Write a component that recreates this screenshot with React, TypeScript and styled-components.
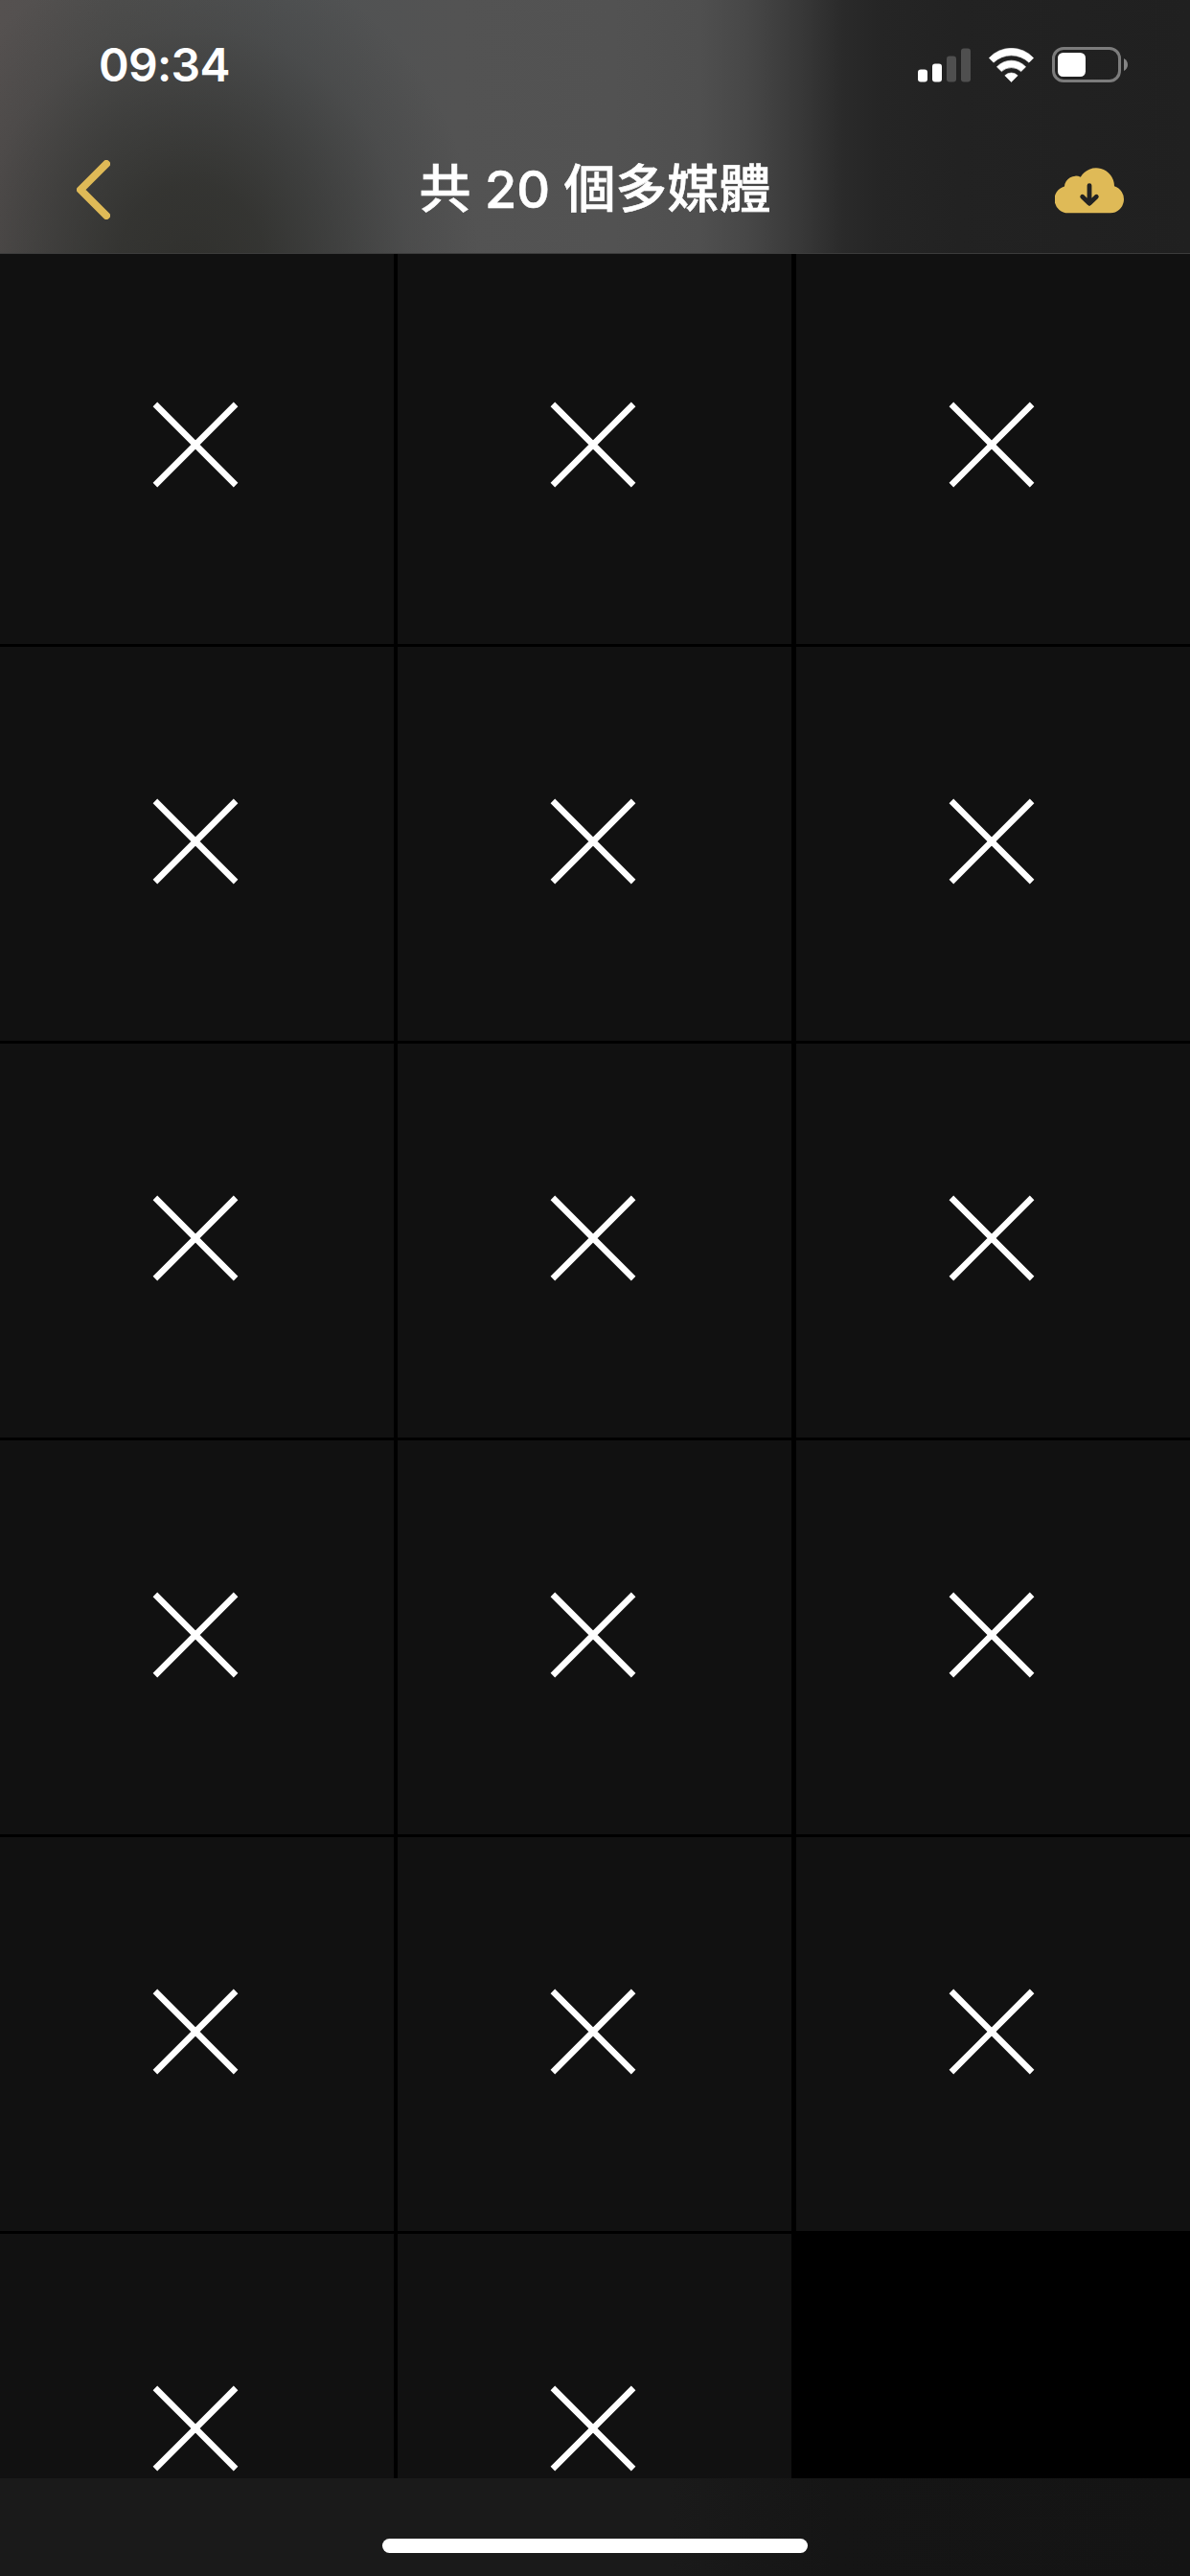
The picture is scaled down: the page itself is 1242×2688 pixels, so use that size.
import React from "react";
import styled, { createGlobalStyle } from "styled-components";

const GOLD = "#dfba57";

const GlobalStyle = createGlobalStyle`
  *, *::before, *::after { box-sizing: border-box; }
  body { margin: 0; background: #000; }
`;

const Screen = styled.main`
  display: flex;
  flex-direction: column;
  width: 1242px;
  height: 2688px;
  overflow: hidden;
  background: #000;
  color: #fff;
  font-family: Inter, "Noto Sans CJK TC", sans-serif;
`;

const Header = styled.header`
  flex: none;
  height: 265px;
  border-bottom: 1px solid #3c3c3c;
  background:
    radial-gradient(ellipse 300px 330px at 200px 275px, rgba(47, 47, 44, 0.95) 0%, rgba(47, 47, 44, 0.84) 25%, rgba(49, 49, 47, 0.56) 50%, rgba(52, 52, 51, 0.22) 75%, rgba(52, 52, 52, 0) 100%),
    linear-gradient(90deg, #555150 0, #4f4f4e 120px, #505253 300px, #535353 480px, #525252 640px, #4f4f4f 730px, #474747 780px, #383838 835px, #2a2a2a 880px, #252525 920px, #222 1000px, #202020 1242px);
`;

const StatusBar = styled.div`
  display: flex;
  align-items: center;
  justify-content: space-between;
  height: 132px;
  padding: 3px 65px 0 103px;
`;

const Clock = styled.time`
  font-size: 48px;
  font-weight: 560;
  line-height: 58px;
  letter-spacing: -0.7px;
`;

const Indicators = styled.div`
  display: flex;
  align-items: center;
  gap: 19px;

  svg { display: block; }
`;

const NavBar = styled.nav`
  display: grid;
  grid-template-columns: 200px 1fr 200px;
  align-items: center;
  height: 132px;
`;

const NavButton = styled.button<{ $side: "left" | "right" }>`
  display: flex;
  justify-content: ${({ $side }) => ($side === "left" ? "flex-start" : "flex-end")};
  padding: ${({ $side }) => ($side === "left" ? "0 0 0 80px" : "0 69px 0 0")};
  border: 0;
  background: none;
  color: ${GOLD};
`;

const Title = styled.h1`
  margin: 0;
  text-align: center;
  font-size: 54px;
  font-weight: 500;
  line-height: 66px;
  white-space: nowrap;
  -webkit-text-stroke: 0.6px #fff;
`;

const Gallery = styled.section`
  flex: 1;
  min-height: 0;
  overflow: hidden;
`;

const Grid = styled.div`
  display: grid;
  grid-template-columns: 415px 416px 411px;
  grid-auto-rows: 411px;
  row-gap: 3px;
  margin-top: -4px;
`;

const Tile = styled.div`
  display: flex;
  align-items: center;
  justify-content: center;
  width: 411px;
  padding: 0 4px 5px 0;
  background: #111;
`;

const HomeBar = styled.footer`
  display: flex;
  flex: none;
  align-items: flex-end;
  justify-content: center;
  height: 102px;
  padding-bottom: 24px;
  background: linear-gradient(90deg, #1a1a1a 0, #1a1a1a 700px, #151515 870px, #141414 1242px);
`;

const HomeIndicator = styled.div`
  width: 444px;
  height: 15px;
  border-radius: 8px;
  background: #fff;
`;

const Signal = () => (
  <svg width="55" height="36" viewBox="0 0 55 36" fill="#fff">
    <rect x="0" y="22.5" width="10" height="13" rx="3" />
    <rect x="15" y="16.5" width="10" height="19" rx="3" />
    <rect x="30" y="8.5" width="10" height="27" rx="3" fill="#4f4f4f" />
    <rect x="45" y="0.5" width="10" height="35" rx="3" fill="#4f4f4f" />
  </svg>
);

const Wifi = () => (
  <svg width="47" height="36" viewBox="0 0 47 36" fill="#fff" stroke="#fff" strokeWidth="0.6" strokeLinejoin="round">
    <path d="M.3 10.5A31.5 31.5 0 0 1 46.7 10.5L42 15.2A27 27 0 0 0 5 15.2Z" />
    <path d="M8.4 19.8A20.5 20.5 0 0 1 38.6 19.8L33.7 24.6A15 15 0 0 0 13.3 24.6Z" />
    <path d="M16.8 28.8A9.4 9.4 0 0 1 30.2 28.8L23.5 35.6Z" />
  </svg>
);

const Battery = () => (
  <svg width="79" height="37" viewBox="0 0 79 37">
    <rect x="1.5" y="1.5" width="69" height="34" rx="10.5" fill="none" stroke="#7c7c7c" strokeWidth="3" />
    <rect x="6" y="6" width="29" height="25" rx="5.5" fill="#fff" />
    <path d="M75 12C80.3 14.5 80.3 22.5 75 25Z" fill="#858585" />
  </svg>
);

const BackIcon = () => (
  <svg width="35" height="62" viewBox="0 0 35 62" fill="none" stroke="currentColor" strokeWidth="8" strokeLinecap="round" strokeLinejoin="round">
    <path d="M31 4L4 31L31 58" />
  </svg>
);

const CloudIcon = () => (
  <svg width="72" height="49" viewBox="0 0 72 49">
    <path
      d="M14 48.3A14.2 14.2 0 0 1 10 20.4A11.9 11.9 0 0 1 26.8 10.7A18.9 18.9 0 0 1 62 20.2A14.4 14.4 0 0 1 58 48.3Z"
      fill="currentColor"
    />
    <path d="M36 19.6V38.2M28.7 31.2L36 38.4L43.3 31.2" fill="none" stroke="#222" strokeWidth="4.8" strokeLinecap="round" strokeLinejoin="round" />
  </svg>
);

const CrossIcon = () => (
  <svg width="90" height="90" viewBox="0 0 90 90" stroke="#fff" strokeWidth="6.5">
    <path d="M2.9 2.9L87.1 87.1M87.1 2.9L2.9 87.1" />
  </svg>
);

const tiles = Array.from({ length: 17 }, (_, i) => i);

export default function App() {
  return (
    <>
      <GlobalStyle />
      <Screen>
        <Header>
          <StatusBar>
            <Clock>09:34</Clock>
            <Indicators>
              <Signal />
              <Wifi />
              <Battery />
            </Indicators>
          </StatusBar>
          <NavBar>
            <NavButton $side="left" aria-label="返回">
              <BackIcon />
            </NavButton>
            <Title>共 20 個多媒體</Title>
            <NavButton $side="right" aria-label="下載">
              <CloudIcon />
            </NavButton>
          </NavBar>
        </Header>
        <Gallery>
          <Grid>
            {tiles.map((i) => (
              <Tile key={i}>
                <CrossIcon />
              </Tile>
            ))}
          </Grid>
        </Gallery>
        <HomeBar>
          <HomeIndicator />
        </HomeBar>
      </Screen>
    </>
  );
}
